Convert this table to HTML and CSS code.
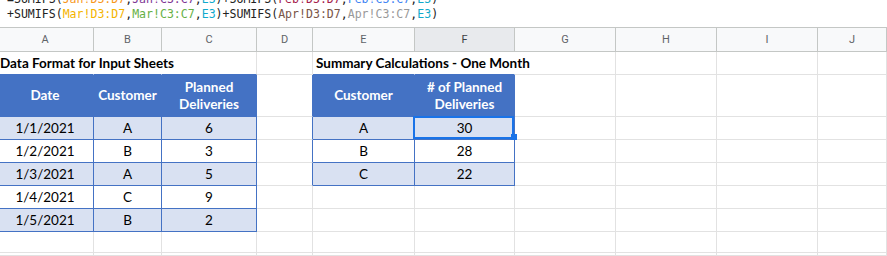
FILE: index.html
```html
<!DOCTYPE html>
<html>
<head>
<meta charset="utf-8">
<link rel="stylesheet" href="styles.css">
</head>
<body>
<div class="formula"><div class="formula-lines">=SUMIFS(<span class="f1">Jan!D3:D7</span>,<span class="f2">Jan!C3:C7</span>,<span class="f3">E3</span>)+SUMIFS(<span class="f4">Feb!D3:D7</span>,<span class="f5">Feb!C3:C7</span>,<span class="f3">E3</span>)
+SUMIFS(<span class="f6">Mar!D3:D7</span>,<span class="f7">Mar!C3:C7</span>,<span class="f3">E3</span>)+SUMIFS(<span class="f8">Apr!D3:D7</span>,<span class="f9">Apr!C3:C7</span>,<span class="f3">E3</span>)</div></div>
<div class="sheet">
  <div class="c hd">A</div><div class="c hd">B</div><div class="c hd">C</div><div class="c hd">D</div><div class="c hd">E</div><div class="c hd on">F</div><div class="c hd">G</div><div class="c hd">H</div><div class="c hd">I</div><div class="c hd">J</div>

  <div class="c title nr bb">Data Format for Input Sheets</div><div class="c nr bb"></div><div class="c bb"></div><div class="c"></div><div class="c title nr bb">Summary Calculations - One Month</div><div class="c nr bb"></div><div class="c"></div><div class="c"></div><div class="c"></div><div class="c"></div>

  <div class="c t th">Date</div><div class="c t th">Customer</div><div class="c t th">Planned<br>Deliveries</div><div class="c br"></div><div class="c t th">Customer</div><div class="c t th"># of Planned<br>Deliveries</div><div class="c"></div><div class="c"></div><div class="c"></div><div class="c"></div>

  <div class="c t band">1/1/2021</div><div class="c t band">A</div><div class="c t band">6</div><div class="c br"></div><div class="c t band">A</div><div class="c t band cur">30<div class="sel"><div class="handle"></div></div></div><div class="c"></div><div class="c"></div><div class="c"></div><div class="c"></div>

  <div class="c t">1/2/2021</div><div class="c t">B</div><div class="c t">3</div><div class="c br"></div><div class="c t">B</div><div class="c t">28</div><div class="c"></div><div class="c"></div><div class="c"></div><div class="c"></div>

  <div class="c t band">1/3/2021</div><div class="c t band">A</div><div class="c t band">5</div><div class="c br"></div><div class="c t band">C</div><div class="c t band">22</div><div class="c"></div><div class="c"></div><div class="c"></div><div class="c"></div>

  <div class="c t">1/4/2021</div><div class="c t">C</div><div class="c t">9</div><div class="c"></div><div class="c"></div><div class="c"></div><div class="c"></div><div class="c"></div><div class="c"></div><div class="c"></div>

  <div class="c t band">1/5/2021</div><div class="c t band">B</div><div class="c t band">2</div><div class="c"></div><div class="c"></div><div class="c"></div><div class="c"></div><div class="c"></div><div class="c"></div><div class="c"></div>

  <div class="c"></div><div class="c"></div><div class="c"></div><div class="c"></div><div class="c"></div><div class="c"></div><div class="c"></div><div class="c"></div><div class="c"></div><div class="c"></div>

  <div class="c"></div><div class="c"></div><div class="c"></div><div class="c"></div><div class="c"></div><div class="c"></div><div class="c"></div><div class="c"></div><div class="c"></div><div class="c"></div>
</div>
</body>
</html>
```

FILE: styles.css
```css
html, body {
  margin: 0;
  padding: 0;
  background: #fff;
  overflow: hidden;
}
body {
  width: 887px;
  height: 256px;
}
.formula {
  height: 27px;
  overflow: hidden;
  box-sizing: border-box;
  padding-left: 7px;
  font-family: "DejaVu Sans Mono", monospace;
  font-size: 11.55px;
  line-height: 15px;
  color: #222;
}
.formula-lines {
  margin-top: -8px;
  white-space: pre;
}
.f1 { color: #f7981d; }
.f2 { color: #7e3794; }
.f3 { color: #11a9cc; }
.f4 { color: #a61d4c; }
.f5 { color: #4285f4; }
.f6 { color: #f4b400; }
.f7 { color: #65b045; }
.f8 { color: #795548; }
.f9 { color: #999999; }

.sheet {
  display: grid;
  grid-template-columns: 97px 68px 95px 56px 102px 100px 101px 101px 101px 1fr;
  grid-template-rows: 25px 23px 42px 23px 23px 23px 23px 23px 21px 3px;
  margin-left: -3px;
  font-family: Lato, sans-serif;
  font-size: 13.5px;
  color: #000;
}
.c {
  box-sizing: border-box;
  min-width: 0;
  border-right: 1px solid #e2e2e2;
  border-bottom: 1px solid #e2e2e2;
  display: flex;
  align-items: center;
  justify-content: center;
  text-align: center;
  white-space: nowrap;
}
.hd {
  background: #f8f9fa;
  border-top: 1px solid #c4c7c5;
  border-right-color: #c4c7c5;
  border-bottom-color: #c4c7c5;
  font-family: Roboto, "Liberation Sans", sans-serif;
  font-size: 11px;
  color: #5f6368;
}
.hd.on {
  background: #e8eaed;
  color: #3c4043;
}
.title {
  justify-content: flex-start;
  padding-left: 3px;
  font-weight: bold;
  overflow: visible;
}
.nr { border-right-color: transparent; }
.bb { border-bottom-color: #4472c4; }
.br { border-right-color: #4472c4; }
.t {
  border-right-color: #4472c4;
  border-bottom-color: #4472c4;
}
.th {
  background: #4472c4;
  color: #fff;
  font-weight: bold;
  line-height: 17px;
}
.band { background: #d9e1f2; }
.cur { position: relative; }
.sel {
  position: absolute;
  left: -2px;
  top: -1px;
  right: 0;
  bottom: 0;
  border: 2px solid #1a73e8;
}
.handle {
  position: absolute;
  right: -5px;
  bottom: -3px;
  width: 6px;
  height: 6px;
  background: #1a73e8;
}
```
